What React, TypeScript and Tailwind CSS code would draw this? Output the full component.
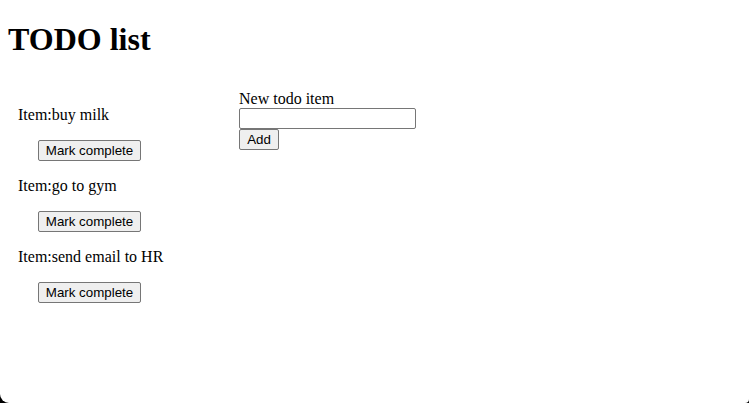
const todos = ["buy milk", "go to gym", "send email to HR"];

function MarkButton({ label }: { label: string }) {
  return (
    <button className="block ml-[20px] w-[103px] h-[21px] px-[6px] bg-[#efefef] border border-[#767676] rounded-[2px] font-['Liberation_Sans',Arial,sans-serif] text-[13.33px] leading-[17px] text-black">
      {label}
    </button>
  );
}

export default function App() {
  return (
    <div className="w-[749px] h-[403px] bg-black">
      <div className="h-full bg-white rounded-bl-[9px] rounded-br-[4px] px-[8px] font-['Liberation_Serif','Times_New_Roman',serif] text-[16px] text-black overflow-hidden">
        <h1 className="pt-[21px] mb-[21px] text-[32px] leading-[37px] font-bold">TODO list</h1>
        <div className="flex">
          {/* list of items */}
          <div className="w-[231px] pt-[11px] pl-[10px]">
            {todos.map((t) => (
              <div key={t}>
                <p className="my-[16px] leading-[18px]">Item:{t}</p>
                <MarkButton label="Mark complete" />
              </div>
            ))}
          </div>
          {/* new item form */}
          <div className="pt-[10px] flex flex-col items-start">
            <label className="leading-[19px]">New todo item</label>
            <input
              type="text"
              className="w-[177px] h-[21px] px-[2px] border border-[#767676] rounded-[2px] bg-white"
            />
            <button className="h-[21px] w-[40px] bg-[#efefef] border border-[#767676] rounded-[2px] font-['Liberation_Sans',Arial,sans-serif] text-[13.33px] leading-[17px] text-black">
              Add
            </button>
          </div>
        </div>
      </div>
    </div>
  );
}
